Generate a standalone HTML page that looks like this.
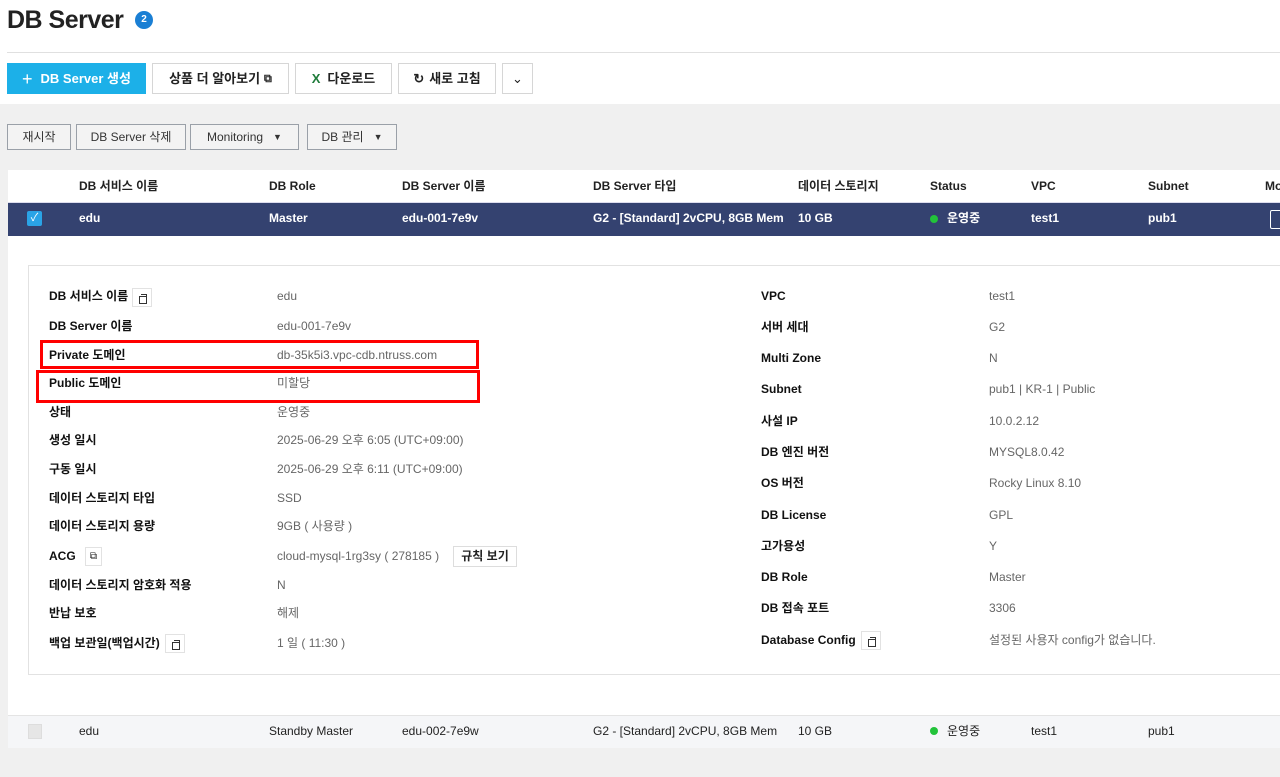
<!DOCTYPE html>
<html><head><meta charset="utf-8"><style>
*{margin:0;padding:0;box-sizing:border-box}
body{width:1280px;height:777px;overflow:hidden;background:#f0f0f0;font-family:"Liberation Sans","Noto Sans CJK KR",sans-serif;font-size:12px;color:#222;position:relative}
.a{position:absolute;white-space:nowrap;line-height:16px}
.hdr{position:absolute;left:0;top:0;width:1280px;height:104px;background:#fff}
.btn{position:absolute;top:63px;height:31px;border:1px solid #d6d6d6;background:#fff;font-size:13px;font-weight:bold;display:flex;align-items:center;justify-content:center;color:#222;line-height:16px}
.b2{position:absolute;top:124px;height:26px;border:1px solid #9aa0a8;background:#f3f3f3;font-size:12px;display:flex;align-items:center;justify-content:center;color:#333;line-height:16px}
.th{top:178px;font-weight:bold;font-size:12px;color:#222}
.tr{top:210px;font-weight:bold;color:#fff}
.l{font-weight:bold;font-size:12px;color:#111}
.v{color:#666;font-size:12px}
.cp{position:absolute;width:20px;height:19px;border:1px solid #e2e2e2;background:#fff}
.cp:before{content:"";position:absolute;left:8px;top:5px;width:5px;height:5px;border-top:1.5px solid #333;border-right:1.5px solid #333}
.cp:after{content:"";position:absolute;left:6px;top:7px;width:6px;height:6px;border:1.5px solid #333}
.r3{top:723px;color:#222}
</style></head><body>
<div class="hdr"></div>
<div class="a" style="left:7px;top:6px;font-size:25px;line-height:28px;font-weight:bold;letter-spacing:-0.5px">DB Server</div>
<div class="a" style="left:135px;top:11px;width:18px;height:18px;border-radius:50%;background:#1a7fd4;color:#fff;font-size:10px;font-weight:bold;text-align:center;line-height:18px">2</div>
<div class="a" style="left:7px;top:52px;width:1273px;height:1px;background:#e0e0e0"></div>
<div class="btn" style="left:7px;width:139px;background:#1cb0e8;border-color:#1cb0e8;color:#fff"><span style="font-size:18px;font-weight:normal;margin-right:8px">+</span>DB Server 생성</div>
<div class="btn" style="left:152px;width:137px">상품 더 알아보기 <span style="font-size:11px;margin-left:4px">⧉</span></div>
<div class="btn" style="left:295px;width:97px"><span style="color:#1e7b3a;margin-right:7px">X</span>다운로드</div>
<div class="btn" style="left:398px;width:98px"><span style="margin-right:5px">↻</span>새로 고침</div>
<div class="btn" style="left:502px;width:31px;font-weight:normal">⌄</div>
<div class="b2" style="left:7px;width:64px">재시작</div>
<div class="b2" style="left:76px;width:110px">DB Server 삭제</div>
<div class="b2" style="left:190px;width:109px">Monitoring &nbsp;&nbsp;<span style="font-size:9px">▼</span></div>
<div class="b2" style="left:307px;width:90px">DB 관리 &nbsp;&nbsp;<span style="font-size:9px">▼</span></div>
<div class="a" style="left:8px;top:170px;width:1272px;height:578px;background:#fff"></div>
<div class="a" style="left:8px;top:202px;width:1272px;height:1px;background:#dde"></div>
<div class="a th" style="left:79px">DB 서비스 이름</div>
<div class="a th" style="left:269px">DB Role</div>
<div class="a th" style="left:402px">DB Server 이름</div>
<div class="a th" style="left:593px">DB Server 타입</div>
<div class="a th" style="left:798px">데이터 스토리지</div>
<div class="a th" style="left:930px">Status</div>
<div class="a th" style="left:1031px">VPC</div>
<div class="a th" style="left:1148px">Subnet</div>
<div class="a th" style="left:1265px">Mo</div>
<div class="a" style="left:8px;top:203px;width:1272px;height:33px;background:#344270"></div>
<div class="a" style="left:27px;top:211px;width:15px;height:15px;background:#2aa3e6;border-radius:2px;color:#fff;font-size:11px;text-align:center;line-height:15px">✓</div>
<div class="a tr" style="left:79px">edu</div>
<div class="a tr" style="left:269px">Master</div>
<div class="a tr" style="left:402px">edu-001-7e9v</div>
<div class="a tr" style="left:593px">G2 - [Standard] 2vCPU, 8GB Mem</div>
<div class="a tr" style="left:798px">10 GB</div>
<div class="a" style="left:930px;top:215px;width:8px;height:8px;border-radius:50%;background:#22c33a"></div>
<div class="a tr" style="left:947px">운영중</div>
<div class="a tr" style="left:1031px">test1</div>
<div class="a tr" style="left:1148px">pub1</div>
<div class="a" style="left:1270px;top:210px;width:12px;height:19px;border:1px solid #fff;border-radius:2px"></div>
<div class="a" style="left:28px;top:265px;width:1260px;height:410px;border:1px solid #e2e2e2;background:#fff"></div>
<div class="a l" style="left:49px;top:288px">DB 서비스 이름</div><div class="cp" style="left:132px;top:288px"></div><div class="a v" style="left:277px;top:288px">edu</div>
<div class="a l" style="left:49px;top:318px">DB Server 이름</div><div class="a v" style="left:277px;top:318px">edu-001-7e9v</div>
<div class="a l" style="left:49px;top:347px">Private 도메인</div><div class="a v" style="left:277px;top:347px">db-35k5i3.vpc-cdb.ntruss.com</div>
<div class="a l" style="left:49px;top:375px">Public 도메인</div><div class="a v" style="left:277px;top:375px">미할당</div>
<div class="a l" style="left:49px;top:404px">상태</div><div class="a v" style="left:277px;top:404px">운영중</div>
<div class="a l" style="left:49px;top:432px">생성 일시</div><div class="a v" style="left:277px;top:432px">2025-06-29 오후 6:05 (UTC+09:00)</div>
<div class="a l" style="left:49px;top:461px">구동 일시</div><div class="a v" style="left:277px;top:461px">2025-06-29 오후 6:11 (UTC+09:00)</div>
<div class="a l" style="left:49px;top:490px">데이터 스토리지 타입</div><div class="a v" style="left:277px;top:490px">SSD</div>
<div class="a l" style="left:49px;top:518px">데이터 스토리지 용량</div><div class="a v" style="left:277px;top:518px">9GB ( 사용량 )</div>
<div class="a l" style="left:49px;top:548px">ACG</div><div class="a" style="left:85px;top:547px;width:17px;height:19px;border:1px solid #e2e2e2;font-size:10px;text-align:center;line-height:17px">⧉</div><div class="a v" style="left:277px;top:548px">cloud-mysql-1rg3sy ( 278185 )</div>
<div class="a" style="left:453px;top:546px;width:64px;height:21px;border:1px solid #ddd;font-size:12px;font-weight:bold;text-align:center;line-height:19px">규칙 보기</div>
<div class="a l" style="left:49px;top:577px">데이터 스토리지 암호화 적용</div><div class="a v" style="left:277px;top:577px">N</div>
<div class="a l" style="left:49px;top:605px">반납 보호</div><div class="a v" style="left:277px;top:605px">해제</div>
<div class="a l" style="left:49px;top:635px">백업 보관일(백업시간)</div><div class="cp" style="left:165px;top:634px"></div><div class="a v" style="left:277px;top:635px">1 일 ( 11:30 )</div>
<div class="a" style="left:40px;top:340px;width:439px;height:29px;border:3px solid #f00"></div>
<div class="a" style="left:36px;top:370px;width:444px;height:33px;border:3px solid #f00"></div>
<div class="a l" style="left:761px;top:288px">VPC</div><div class="a v" style="left:989px;top:288px">test1</div>
<div class="a l" style="left:761px;top:319px">서버 세대</div><div class="a v" style="left:989px;top:319px">G2</div>
<div class="a l" style="left:761px;top:350px">Multi Zone</div><div class="a v" style="left:989px;top:350px">N</div>
<div class="a l" style="left:761px;top:381px">Subnet</div><div class="a v" style="left:989px;top:381px">pub1 | KR-1 | Public</div>
<div class="a l" style="left:761px;top:413px">사설 IP</div><div class="a v" style="left:989px;top:413px">10.0.2.12</div>
<div class="a l" style="left:761px;top:444px">DB 엔진 버전</div><div class="a v" style="left:989px;top:444px">MYSQL8.0.42</div>
<div class="a l" style="left:761px;top:475px">OS 버전</div><div class="a v" style="left:989px;top:475px">Rocky Linux 8.10</div>
<div class="a l" style="left:761px;top:507px">DB License</div><div class="a v" style="left:989px;top:507px">GPL</div>
<div class="a l" style="left:761px;top:538px">고가용성</div><div class="a v" style="left:989px;top:538px">Y</div>
<div class="a l" style="left:761px;top:569px">DB Role</div><div class="a v" style="left:989px;top:569px">Master</div>
<div class="a l" style="left:761px;top:600px">DB 접속 포트</div><div class="a v" style="left:989px;top:600px">3306</div>
<div class="a l" style="left:761px;top:632px">Database Config</div><div class="cp" style="left:861px;top:631px"></div><div class="a v" style="left:989px;top:632px">설정된 사용자 config가 없습니다.</div>
<div class="a" style="left:8px;top:715px;width:1272px;height:33px;background:#f5f6f8;border-top:1px solid #e4e4e4"></div>
<div class="a" style="left:28px;top:724px;width:14px;height:15px;background:#e6e6e6;border:1px solid #ddd"></div>
<div class="a r3" style="left:79px">edu</div>
<div class="a r3" style="left:269px">Standby Master</div>
<div class="a r3" style="left:402px">edu-002-7e9w</div>
<div class="a r3" style="left:593px">G2 - [Standard] 2vCPU, 8GB Mem</div>
<div class="a r3" style="left:798px">10 GB</div>
<div class="a" style="left:930px;top:727px;width:8px;height:8px;border-radius:50%;background:#22c33a"></div>
<div class="a r3" style="left:947px">운영중</div>
<div class="a r3" style="left:1031px">test1</div>
<div class="a r3" style="left:1148px">pub1</div>
</body></html>
